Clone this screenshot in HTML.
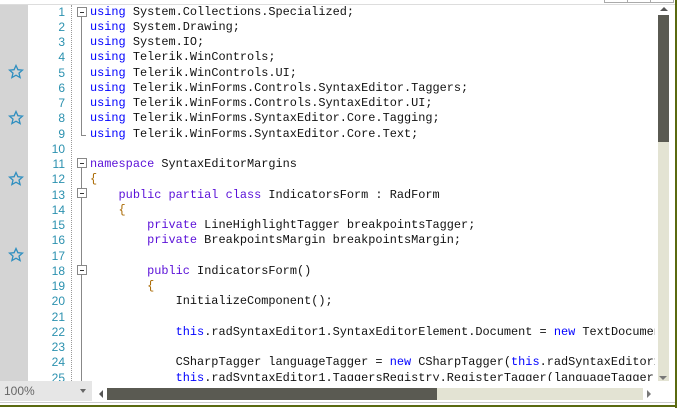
<!DOCTYPE html>
<html><head><style>
body{margin:0;width:677px;height:408px;overflow:hidden;background:#fff;position:relative;font-family:"Liberation Mono",monospace;}
.abs{position:absolute;}
#code{left:90px;top:4.5px;width:565px;height:376px;overflow:hidden;font-size:11.9px;line-height:15.25px;white-space:pre;color:#111;}
#nums{left:28px;top:4.5px;width:37px;height:376px;overflow:hidden;font-family:"Liberation Sans",sans-serif;font-size:12px;line-height:15.25px;text-align:right;color:#2b91af;}
.k{color:#0000ff}.p{color:#5a10d8}.b{color:#a86800}
.fb{position:absolute;left:77px;width:8px;height:8px;border:1px solid #888;background:#fff;}
.fb:after{content:"";position:absolute;left:2px;top:3.5px;width:4px;height:1px;background:#333;}
.star{position:absolute;left:8px;width:16px;height:16px;}
</style></head><body>
<div class="abs" style="left:0;top:0;width:677px;height:4px;border-bottom:1px solid #ddd"></div>
<div class="abs" style="left:604px;top:0;width:22px;height:2px;border:1px solid #aaa;border-top:none"></div>
<div class="abs" style="left:627px;top:0;width:22px;height:2px;border:1px solid #aaa;border-top:none"></div>
<div class="abs" style="left:650px;top:0;width:22px;height:2px;border:1px solid #aaa;border-top:none"></div>
<div class="abs" style="left:0;top:5px;width:28px;height:376px;background:#d4d4d4"></div>
<div class="abs" style="left:71px;top:5px;height:376px;border-left:1px dotted #999"></div>
<div class="abs" style="left:81px;top:12px;width:1px;height:123px;background:#888"></div>
<div class="abs" style="left:81px;top:135px;width:5px;height:1px;background:#888"></div>
<div class="abs" style="left:81px;top:165px;width:1px;height:216px;background:#888"></div>
<div class="fb" style="top:7px"></div>
<div class="fb" style="top:158px"></div>
<div class="fb" style="top:188px"></div>
<div class="fb" style="top:265px"></div>
<svg class="star" style="top:64px" viewBox="0 0 16 16"><path d="M8 1.5l1.9 4.2 4.6.4-3.5 3 1.1 4.5L8 11.2 3.9 13.6 5 9.1 1.5 6.1l4.6-.4z" fill="none" stroke="#2f8fc0" stroke-width="1.3"/></svg>
<svg class="star" style="top:110px" viewBox="0 0 16 16"><path d="M8 1.5l1.9 4.2 4.6.4-3.5 3 1.1 4.5L8 11.2 3.9 13.6 5 9.1 1.5 6.1l4.6-.4z" fill="none" stroke="#2f8fc0" stroke-width="1.3"/></svg>
<svg class="star" style="top:171px" viewBox="0 0 16 16"><path d="M8 1.5l1.9 4.2 4.6.4-3.5 3 1.1 4.5L8 11.2 3.9 13.6 5 9.1 1.5 6.1l4.6-.4z" fill="none" stroke="#2f8fc0" stroke-width="1.3"/></svg>
<svg class="star" style="top:247px" viewBox="0 0 16 16"><path d="M8 1.5l1.9 4.2 4.6.4-3.5 3 1.1 4.5L8 11.2 3.9 13.6 5 9.1 1.5 6.1l4.6-.4z" fill="none" stroke="#2f8fc0" stroke-width="1.3"/></svg>
<div id="nums" class="abs">1<br>2<br>3<br>4<br>5<br>6<br>7<br>8<br>9<br>10<br>11<br>12<br>13<br>14<br>15<br>16<br>17<br>18<br>19<br>20<br>21<br>22<br>23<br>24<br>25</div>
<div id="code" class="abs"><span class="k">using</span> System.Collections.Specialized;
<span class="k">using</span> System.Drawing;
<span class="k">using</span> System.IO;
<span class="k">using</span> Telerik.WinControls;
<span class="k">using</span> Telerik.WinControls.UI;
<span class="k">using</span> Telerik.WinForms.Controls.SyntaxEditor.Taggers;
<span class="k">using</span> Telerik.WinForms.Controls.SyntaxEditor.UI;
<span class="k">using</span> Telerik.WinForms.SyntaxEditor.Core.Tagging;
<span class="k">using</span> Telerik.WinForms.SyntaxEditor.Core.Text;

<span class="p">namespace</span> SyntaxEditorMargins
<span class="b">{</span>
    <span class="p">public partial class</span> IndicatorsForm : RadForm
    <span class="b">{</span>
        <span class="p">private</span> LineHighlightTagger breakpointsTagger;
        <span class="p">private</span> BreakpointsMargin breakpointsMargin;

        <span class="p">public</span> IndicatorsForm()
        <span class="b">{</span>
            InitializeComponent();

            <span class="k">this</span>.radSyntaxEditor1.SyntaxEditorElement.Document = <span class="k">new</span> TextDocument

            CSharpTagger languageTagger = <span class="k">new</span> CSharpTagger(<span class="k">this</span>.radSyntaxEditor1
            <span class="k">this</span>.radSyntaxEditor1.TaggersRegistry.RegisterTagger(languageTagger</div>
<div class="abs" style="left:658px;top:5px;width:11px;height:376px;background:#e3e3d3"></div>
<div class="abs" style="left:658px;top:5px;width:11px;height:10px;background:#fff"></div>
<div class="abs" style="left:660px;top:7px;width:0;height:0;border-left:4px solid transparent;border-right:4px solid transparent;border-bottom:4px solid #555"></div>
<div class="abs" style="left:658px;top:15px;width:11px;height:127px;background:#5a5a52"></div>
<div class="abs" style="left:659px;top:376px;width:0;height:0;border-left:4px solid transparent;border-right:4px solid transparent;border-top:4px solid #777"></div>
<div class="abs" style="left:0;top:381px;width:92px;height:20px;background:#e6e6e6;font-family:'Liberation Sans',sans-serif;font-size:12px;color:#666;line-height:20px;padding-left:4px;box-sizing:border-box">100%</div>
<div class="abs" style="left:80px;top:389px;width:0;height:0;border-left:3px solid transparent;border-right:3px solid transparent;border-top:4px solid #666"></div>
<div class="abs" style="left:99px;top:390px;width:0;height:0;border-top:4px solid transparent;border-bottom:4px solid transparent;border-right:4px solid #555"></div>
<div class="abs" style="left:107px;top:388px;width:330px;height:12px;background:#5a5a52"></div>
<div class="abs" style="left:437px;top:388px;width:206px;height:12px;background:#e3e3d3"></div>
<div class="abs" style="left:647px;top:390px;width:0;height:0;border-top:4px solid transparent;border-bottom:4px solid transparent;border-left:4px solid #777"></div>
<div class="abs" style="left:0;top:402px;width:677px;height:1px;background:#ccc"></div>
<div class="abs" style="left:0;top:405px;width:677px;height:2px;background:#5a6a10"></div>
<div class="abs" style="left:675px;top:0;width:2px;height:408px;background:#5a6a10"></div>
</body></html>
